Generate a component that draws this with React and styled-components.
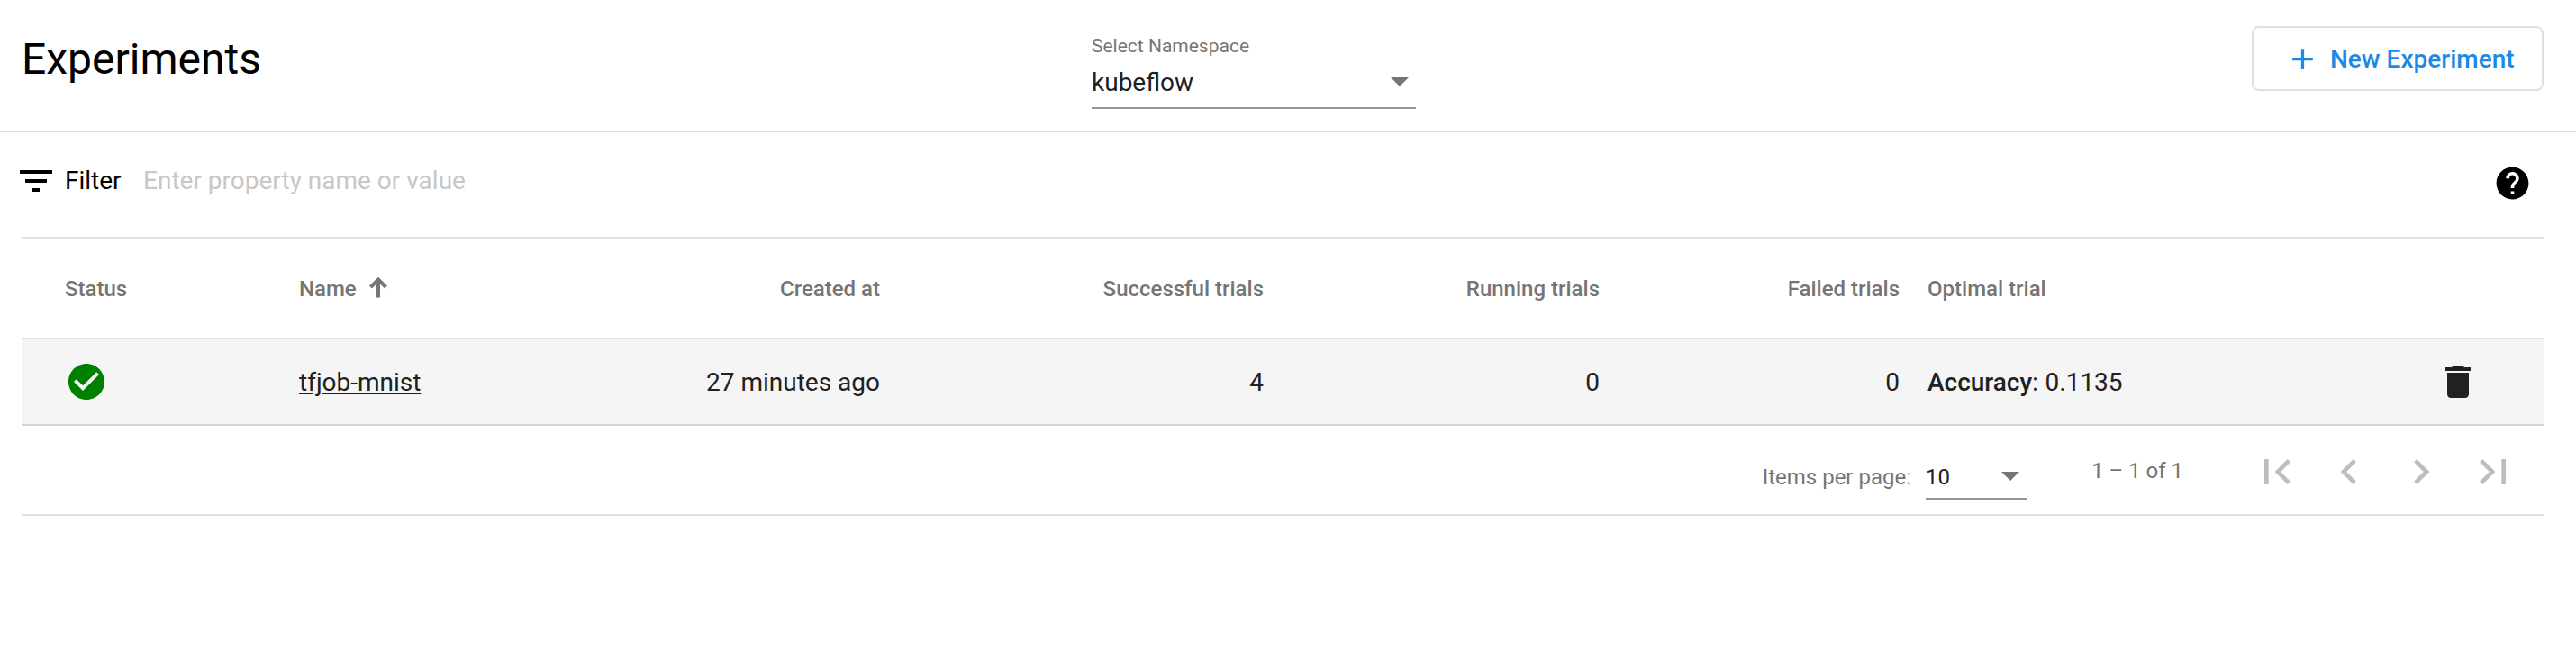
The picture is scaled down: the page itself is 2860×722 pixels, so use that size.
import React from "react";
import styled, { createGlobalStyle } from "styled-components";

const GlobalStyle = createGlobalStyle`
  *, *::before, *::after { box-sizing: border-box; }
  body {
    margin: 0;
    background: #fff;
    color: #000;
    font-family: Roboto, "Liberation Sans", sans-serif;
    font-size: 28px;
  }
  svg { display: block; flex: none; }
`;

const Page = styled.div`
  height: 722px;
  overflow: hidden;
  background: #fff;
`;

const Header = styled.header`
  display: grid;
  grid-template-columns: 1188px 360px 1fr;
  align-items: start;
  height: 147px;
  padding: 0 36px 0 24px;
  border-bottom: 2px solid #e0e0e0;
`;

const Title = styled.h1`
  margin: 34px 0 0;
  font-size: 48px;
  font-weight: 400;
  line-height: 64px;
`;

const NamespaceField = styled.div`
  height: 121px;
  padding-top: 39px;
  border-bottom: 2px solid #949494;
`;

const FieldLabel = styled.div`
  color: #757575;
  font-size: 21px;
  line-height: 24px;
`;

const FieldValue = styled.div`
  display: flex;
  align-items: center;
  justify-content: space-between;
  height: 32px;
  margin-top: 12px;
  padding-right: 8px;
  color: #212121;
  line-height: 32px;
`;

const ControlText = styled.span`
  padding-top: 2px;
`;

const Caret = styled.span`
  width: 0;
  height: 0;
  border: 10px solid transparent;
  border-top-color: #757575;
  border-bottom-width: 0;
`;

const NewButton = styled.button`
  display: flex;
  align-items: center;
  justify-self: end;
  gap: 11px;
  width: 324px;
  height: 72px;
  margin: 29px 0 0;
  padding: 0 0 0 35px;
  border: 2px solid #e0e0e0;
  border-radius: 8px;
  background: #fff;
  color: #1e88e5;
  font: 500 28px/36px Roboto, sans-serif;
  white-space: nowrap;
`;

const Content = styled.main`
  padding: 0 36px 0 24px;
`;

const FilterBar = styled.div`
  display: flex;
  align-items: center;
  height: 116px;
  margin-left: -8px;
  padding: 0 13px 8px 0;
`;

const FilterLabel = styled.label`
  width: 87px;
  margin-left: 8px;
  line-height: 32px;
`;

const FilterInput = styled.div`
  flex: 1;
  color: #c7c7c7;
  line-height: 32px;
`;

const HelpSlot = styled.div`
  padding-top: 5px;
`;

const Row = styled.div`
  display: grid;
  grid-template-columns: 260px 645px 426px 373px 333px 1fr 96px;
  align-items: center;
  height: ${(p) => (p.$head ? 114 : 96)}px;
  padding: 0 23px 0 48px;
  border-top: ${(p) => (p.$head ? "2px solid #e0e0e0" : "0")};
  border-bottom: 2px solid ${(p) => (p.$head ? "#e0e0e0" : "#d6d6d6")};
  background: ${(p) => (p.$head ? "#fff" : "#f5f5f5")};
  color: ${(p) => (p.$head ? "#757575" : "#212121")};
  font-size: ${(p) => (p.$head ? 24 : 28)}px;
  font-weight: ${(p) => (p.$head ? 500 : 400)};
  line-height: 32px;
  white-space: nowrap;
`;

const NameGroup = styled.div`
  display: grid;
  grid-template-columns: 1fr auto;
  align-items: center;
`;

const TextCell = styled.div`
  padding-top: 2px;
`;

const SortName = styled.div`
  display: flex;
  align-items: center;
  gap: 13px;

  svg { margin-bottom: 2px; }
`;

const NameLink = styled.a`
  color: inherit;
  text-decoration: underline;
`;

const NumberCell = styled(TextCell)`
  text-align: right;
`;

const OptimalCell = styled(TextCell)`
  padding-left: 31px;
`;

const Metric = styled.span`
  font-weight: 500;
`;

const Paginator = styled.footer`
  display: flex;
  align-items: center;
  justify-content: flex-end;
  height: 100px;
  padding-right: 16px;
  border-bottom: 2px solid #e0e0e0;
  color: #757575;
  font-size: 24px;
  line-height: 28px;
`;

const PageSizeLabel = styled.span`
  padding-top: 16px;
  margin-right: 16px;
`;

const PageSizeField = styled.div`
  display: flex;
  align-items: center;
  justify-content: space-between;
  width: 112px;
  height: 52px;
  margin-top: 14px;
  padding: 2px 8px 0 0;
  border-bottom: 2px solid #949494;
  color: #212121;
`;

const RangeText = styled.span`
  width: 166px;
  margin-left: 72px;
  padding-top: 2px;
`;

const PageButton = styled.button`
  display: grid;
  place-items: center;
  width: 80px;
  height: 80px;
  margin: 4px 0 0;
  padding: 0;
  border: 0;
  background: transparent;
  color: #bdbdbd;
`;

const Icon = ({ d, size = 48, color = "currentColor" }) => (
  <svg width={size} height={size} viewBox="0 0 24 24" fill={color} aria-hidden="true">
    <path d={d} />
  </svg>
);

const paths = {
  add: "M19 13h-6v6h-2v-6H5v-2h6V5h2v6h6v2z",
  filter: "M10 18h4v-2h-4v2zM3 6v2h18V6H3zm3 7h12v-2H6v2z",
  help: "M12 2C6.48 2 2 6.48 2 12s4.48 10 10 10 10-4.48 10-10S17.52 2 12 2zm1 17h-2v-2h2v2zm2.07-7.75l-.9.92C13.45 12.9 13 13.5 13 15h-2v-.5c0-1.1.45-2.1 1.17-2.83l1.24-1.26c.37-.36.59-.86.59-1.41 0-1.1-.9-2-2-2s-2 .9-2 2H8c0-2.21 1.79-4 4-4s4 1.79 4 4c0 .88-.36 1.68-.93 2.25z",
  check: "M12 2C6.48 2 2 6.48 2 12s4.48 10 10 10 10-4.48 10-10S17.52 2 12 2zm-2 15l-5-5 1.41-1.41L10 14.17l7.59-7.59L19 8l-9 9z",
  trash: "M6 19c0 1.1.9 2 2 2h8c1.1 0 2-.9 2-2V7H6v12zM19 4h-3.5l-1-1h-5l-1 1H5v2h14V4z",
};

const pageIcons = [
  ["First page", "M18.41 16.59L13.82 12l4.59-4.59L17 6l-6 6 6 6zM6 6h2v12H6z"],
  ["Previous page", "M15.41 7.41L14 6l-6 6 6 6 1.41-1.41L10.83 12z"],
  ["Next page", "M10 6L8.59 7.41 13.17 12l-4.58 4.59L10 18l6-6z"],
  ["Last page", "M5.59 7.41L10.18 12l-4.59 4.59L7 18l6-6-6-6zM16 6h2v12h-2z"],
];

const SortArrow = () => (
  <svg width="22" height="24" viewBox="0 0 22 24" fill="none" stroke="#757575" strokeWidth="4">
    <path d="M11 23.5V4M2.5 12L11 3.5L19.5 12" />
  </svg>
);

export default function App() {
  return (
    <>
      <GlobalStyle />
      <Page>
        <Header>
          <Title>Experiments</Title>
          <NamespaceField>
            <FieldLabel>Select Namespace</FieldLabel>
            <FieldValue>
              <ControlText>kubeflow</ControlText>
              <Caret />
            </FieldValue>
          </NamespaceField>
          <NewButton>
            <Icon d={paths.add} size={39} />
            <ControlText>New Experiment</ControlText>
          </NewButton>
        </Header>
        <Content>
          <FilterBar>
            <Icon d={paths.filter} />
            <FilterLabel>Filter</FilterLabel>
            <FilterInput>Enter property name or value</FilterInput>
            <HelpSlot>
              <Icon d={paths.help} size={43} />
            </HelpSlot>
          </FilterBar>
          <Row $head>
            <TextCell>Status</TextCell>
            <NameGroup>
              <SortName>
                <ControlText>Name</ControlText>
                <SortArrow />
              </SortName>
              <NumberCell>Created at</NumberCell>
            </NameGroup>
            <NumberCell>Successful trials</NumberCell>
            <NumberCell>Running trials</NumberCell>
            <NumberCell>Failed trials</NumberCell>
            <OptimalCell>Optimal trial</OptimalCell>
          </Row>
          <Row>
            <Icon d={paths.check} color="green" />
            <NameGroup>
              <TextCell>
                <NameLink>tfjob-mnist</NameLink>
              </TextCell>
              <NumberCell>27 minutes ago</NumberCell>
            </NameGroup>
            <NumberCell>4</NumberCell>
            <NumberCell>0</NumberCell>
            <NumberCell>0</NumberCell>
            <OptimalCell>
              <Metric>Accuracy:</Metric> 0.1135
            </OptimalCell>
            <Icon d={paths.trash} />
          </Row>
          <Paginator>
            <PageSizeLabel>Items per page:</PageSizeLabel>
            <PageSizeField>
              <ControlText>10</ControlText>
              <Caret />
            </PageSizeField>
            <RangeText>1 – 1 of 1</RangeText>
            {pageIcons.map(([label, d]) => (
              <PageButton key={label} aria-label={label}>
                <Icon d={d} size={56} />
              </PageButton>
            ))}
          </Paginator>
        </Content>
      </Page>
    </>
  );
}
